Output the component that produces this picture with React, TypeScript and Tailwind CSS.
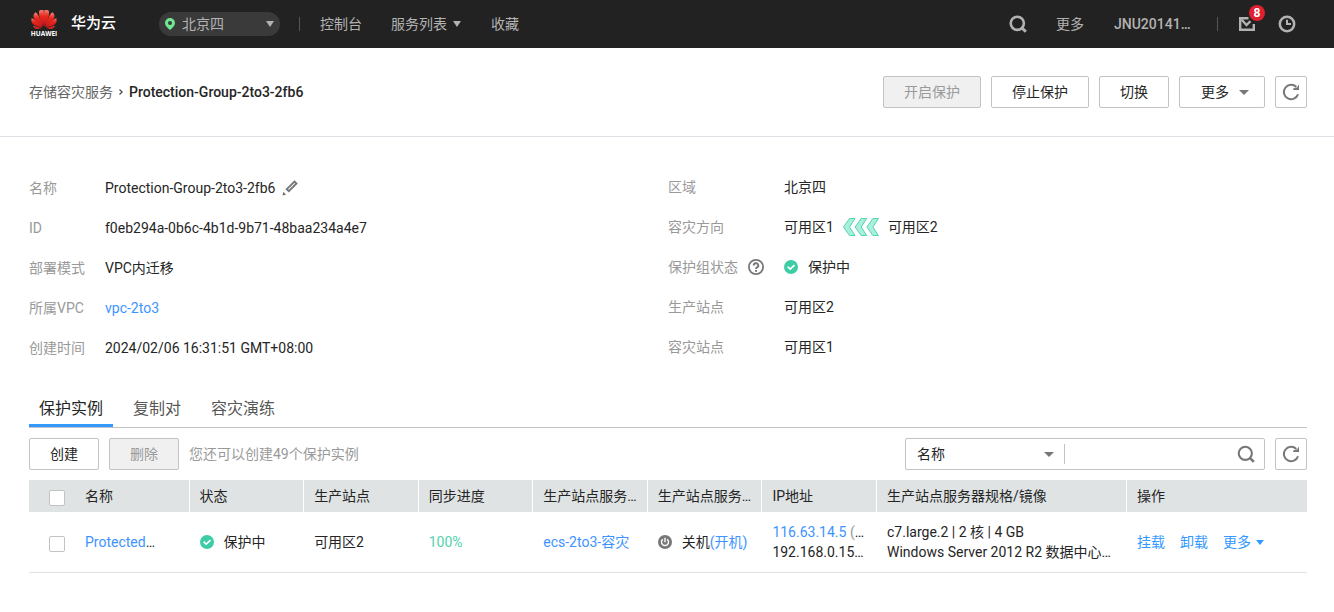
import type { ReactNode } from "react";

function HuaweiLogo() {
  return (
    <svg className="h-7 w-7" viewBox="0 0 28 28" role="img" aria-label="HUAWEI">
      <defs>
        <linearGradient id="petal" x1="0" y1="0" x2="0" y2="1">
          <stop offset="0" stopColor="#f58a78" />
          <stop offset="0.4" stopColor="#e8281f" />
          <stop offset="1" stopColor="#cc161c" />
        </linearGradient>
      </defs>
      <g fill="url(#petal)" transform="translate(.7 -1) scale(.95)">
        <path d="M13.600 18.600C10.300 12.500 8 6.500 8.800 2.400C9.500 1 11.400 .2 12.800 .1C14.200 .9 14.300 8 13.600 18.600Z" />
        <path d="M14.400 18.600C17.700 12.500 20 6.500 19.200 2.400C18.500 1 16.600 .2 15.200 .1C13.800 .9 13.700 8 14.400 18.600Z" />
        <path d="M12.900 18.800C11.800 14.500 8.900 6.700 5.400 3.500C3.500 4.500 2.700 6.500 3 8.400C3.600 12 8.500 16.400 12.900 18.800Z" />
        <path d="M15.100 18.800C16.200 14.500 19.100 6.700 22.600 3.500C24.500 4.500 25.300 6.500 25 8.400C24.400 12 19.500 16.400 15.100 18.800Z" />
        <path d="M12.300 19.200C9.100 15.600 4.500 11.600 1.100 9.500C.2 12 .6 14.600 2.800 16.200C5.200 17.800 9 18.900 12.300 19.200Z" />
        <path d="M15.700 19.200C18.900 15.600 23.500 11.600 26.900 9.500C27.800 12 27.400 14.600 25.200 16.200C22.800 17.800 19 18.900 15.700 19.200Z" />
        <path d="M11.800 19.700C8.800 19.300 5.400 18.400 2.300 17.500C3.200 19.600 5 21.100 6.900 21.100C8.500 21 10.400 20.300 11.800 19.700Z" />
        <path d="M16.200 19.700C19.200 19.300 22.600 18.400 25.700 17.500C24.800 19.600 23 21.100 21.100 21.100C19.500 21 17.600 20.300 16.200 19.700Z" />
      </g>
      <text x="14" y="25.800" textAnchor="middle" fontSize="6.500" fontWeight="700" fontFamily="Open Sans, sans-serif" fill="#fff">
        HUAWEI
      </text>
    </svg>
  );
}

function Caret({ className }: { className: string }) {
  return (
    <svg className={className} viewBox="0 0 10 6" preserveAspectRatio="none" aria-hidden="true">
      <path d="M0 0h10L5 6z" fill="currentColor" />
    </svg>
  );
}

function SearchIcon({ bold }: { bold?: boolean }) {
  return (
    <svg className="size-[18px]" viewBox="0 0 18 18" fill="none" stroke="currentColor" strokeWidth={bold ? 2.6 : 2.1} aria-hidden="true">
      <circle cx="8.300" cy="8.300" r="6.600" />
      <path d="M12.800 12.800l4 4" strokeWidth={bold ? 3 : 2.6} />
    </svg>
  );
}

function RefreshIcon() {
  return (
    <svg className="size-[18px]" viewBox="0 0 18 18" fill="none" stroke="currentColor" strokeWidth="2" aria-hidden="true">
      <path d="M16 11.200A7.200 7.200 0 1 1 14.300 4" />
      <path d="M17 1.400v5.600h-5.800v-1.600l3.800-.8z" fill="currentColor" stroke="none" />
    </svg>
  );
}

function PencilIcon() {
  return (
    <svg className="size-4" viewBox="0 0 16 16" aria-hidden="true">
      <path d="M4.800 9.200L12.500 1.500l2 2-7.700 7.700z" fill="none" stroke="#777" strokeWidth="1.900" />
      <path d="M.4 15.600l.9-3.800 2.900 2.900z" fill="#777" />
    </svg>
  );
}

function CheckBadge() {
  return (
    <svg className="size-3.5 shrink-0" viewBox="0 0 14 14" aria-hidden="true">
      <circle cx="7" cy="7" r="7" fill="#3dcca6" />
      <path d="M3.600 6.700l2.600 2.400 4.300-4" fill="none" stroke="#fff" strokeWidth="1.700" />
    </svg>
  );
}

function PowerBadge() {
  return (
    <svg className="size-3.5 shrink-0" viewBox="0 0 14 14" fill="none" aria-hidden="true">
      <circle cx="7" cy="7" r="7" fill="#777" />
      <path d="M4.800 4.300a3.500 3.500 0 1 0 4.400 0" stroke="#fff" strokeWidth="1.400" />
      <path d="M7 2.800v4.400" stroke="#fff" strokeWidth="1.400" />
    </svg>
  );
}

function HelpIcon() {
  return (
    <svg className="size-4" viewBox="0 0 16 16" fill="none" stroke="#777" aria-hidden="true">
      <circle cx="8" cy="8" r="7.100" strokeWidth="1.800" />
      <path d="M5.700 6.500a2.300 2.200 0 1 1 3.400 1.900c-.8.400-1.100.8-1.100 1.500" strokeWidth="1.900" />
      <path d="M7 10.900h2v1.800H7z" fill="#777" stroke="none" />
    </svg>
  );
}

function DirectionArrows() {
  return (
    <svg className="h-[18px] w-9" viewBox="0 0 36 18" fill="#a9efdc" stroke="#50d4b1" aria-hidden="true">
      <path d="M6.500 .5h5.500L6.500 9l5.500 8.500H6.500L.5 9z" />
      <path d="M18.200 .5h5.500L18.200 9l5.500 8.500h-5.500L12.200 9z" />
      <path d="M29.900 .5h5.500L29.900 9l5.500 8.500h-5.500L23.900 9z" />
    </svg>
  );
}

function MailIcon() {
  return (
    <svg className="h-4 w-[18px]" viewBox="0 0 18 16" fill="none" stroke="currentColor" strokeWidth="2.400" aria-hidden="true">
      <path d="M10.500 2.200H2.200v11.600h13.600V8" />
      <path d="M3.500 3.500L8.500 9l4-3.800" />
    </svg>
  );
}

function ClockIcon() {
  return (
    <svg className="size-[18px]" viewBox="0 0 18 18" fill="none" stroke="currentColor" strokeWidth="2.500" aria-hidden="true">
      <circle cx="9" cy="9" r="7.200" />
      <path d="M9 4.800V9h4" strokeWidth="2" />
    </svg>
  );
}

const buttonBase = "h-8 rounded-xs border border-[#c3c3c3] bg-white text-[#252525]";
const disabledButton = "h-8 rounded-xs border border-[#c3c3c3] bg-[#f0f0f0] text-[#999]";

function TopBar() {
  return (
    <header className="flex h-12 items-center bg-[#222] pr-[38px] pl-[30px] text-[#b2b2b2]">
      <a href="#home" className="flex items-center gap-[13px]">
        <HuaweiLogo />
        <span className="text-[15px] font-medium text-white">华为云</span>
      </a>
      <button type="button" className="ml-[43px] flex h-6 w-[121px] items-center rounded-full bg-[#3a3a3a] px-1.5">
        <svg className="h-3 w-2.5" viewBox="0 0 10 12" aria-hidden="true">
          <path d="M5 0a5 5 0 0 1 5 5c0 3-3.500 5.500-5 7-1.500-1.500-5-4-5-7a5 5 0 0 1 5-5zm0 3a2 2 0 1 0 0 4 2 2 0 0 0 0-4z" fill="#6fe890" fillRule="evenodd" />
        </svg>
        <span className="ml-[7px]">北京四</span>
        <Caret className="ml-auto h-1.5 w-2" />
      </button>
      <nav className="ml-[19px] flex items-center">
        <span className="mr-5 h-3.5 w-px bg-[#555]" />
        <a href="#console">控制台</a>
        <button type="button" className="ml-[29px] flex items-center gap-1.5">
          服务列表
          <Caret className="h-1.5 w-2" />
        </button>
        <a href="#favorites" className="ml-[30px]">收藏</a>
      </nav>
      <div className="ml-auto flex items-center">
        <button type="button" aria-label="搜索"><SearchIcon bold /></button>
        <button type="button" className="ml-[29px]">更多</button>
        <button type="button" className="ml-[30px] w-[77px] text-left font-medium whitespace-nowrap">JNU20141…</button>
        <span className="ml-[26px] h-3.5 w-px bg-[#555]" />
        <button type="button" className="relative ml-5" aria-label="消息">
          <MailIcon />
          <span className="absolute -top-[11px] left-[11px] flex size-4 items-center justify-center rounded-full bg-[#e0202e] text-xs font-bold text-white">8</span>
        </button>
        <button type="button" className="ml-[22px]" aria-label="历史"><ClockIcon /></button>
      </div>
    </header>
  );
}

function PageHeader() {
  return (
    <div className="flex items-center justify-between border-b border-[#dfe1e6] pt-7 pr-[27px] pb-7 pl-[29px]">
      <div className="flex items-center">
        <a href="#sdrs" className="text-[#666]">存储容灾服务</a>
        <svg className="mx-1.5 h-2 w-1" viewBox="0 0 4 8" fill="none" stroke="#444" strokeWidth="1.200" aria-hidden="true">
          <path d="M.5 1.500L3.200 4 .5 6.500" />
        </svg>
        <h1 className="font-medium text-[#252525]">Protection-Group-2to3-2fb6</h1>
      </div>
      <div className="flex gap-2.5">
        <button type="button" disabled className={`${disabledButton} w-[98px]`}>开启保护</button>
        <button type="button" className={`${buttonBase} w-[98px]`}>停止保护</button>
        <button type="button" className={`${buttonBase} w-[70px]`}>切换</button>
        <button type="button" className={`${buttonBase} flex w-[86px] items-center justify-center gap-2.5 pl-1.5`}>
          更多
          <Caret className="h-[5px] w-2.5 text-[#777]" />
        </button>
        <button type="button" aria-label="刷新" className={`${buttonBase} flex w-8 items-center justify-center`}>
          <span className="text-[#777]"><RefreshIcon /></span>
        </button>
      </div>
    </div>
  );
}

function Field({ label, wide, children }: { label: ReactNode; wide?: boolean; children: ReactNode }) {
  return (
    <div className="flex h-10 items-center">
      <dt className={`flex items-center gap-2.5 text-[#999] ${wide ? "w-[116px]" : "w-[76px]"}`}>{label}</dt>
      <dd className="flex items-center">{children}</dd>
    </div>
  );
}

function Details() {
  return (
    <div className="grid grid-cols-2 gap-x-0.5 px-[29px] pt-[30px]">
      <dl className="pt-px">
        <Field label="名称">
          Protection-Group-2to3-2fb6
          <button type="button" aria-label="编辑名称" className="ml-[7px]"><PencilIcon /></button>
        </Field>
        <Field label="ID">f0eb294a-0b6c-4b1d-9b71-48baa234a4e7</Field>
        <Field label="部署模式">VPC内迁移</Field>
        <Field label="所属VPC"><a href="#vpc" className="text-[#3d94ff]">vpc-2to3</a></Field>
        <Field label="创建时间">2024/02/06 16:31:51 GMT+08:00</Field>
      </dl>
      <dl>
        <Field wide label="区域">北京四</Field>
        <Field wide label="容灾方向">
          <span className="flex items-center gap-[9px]">可用区1<DirectionArrows />可用区2</span>
        </Field>
        <Field wide label={<>保护组状态<HelpIcon /></>}>
          <span className="flex items-center gap-2.5"><CheckBadge />保护中</span>
        </Field>
        <Field wide label="生产站点">可用区2</Field>
        <Field wide label="容灾站点">可用区1</Field>
      </dl>
    </div>
  );
}

function Tabs() {
  const tab = "h-9 border-b-[3px] px-2.5 pt-0.5";
  return (
    <div role="tablist" className="mt-[23px] flex h-[37px] gap-2.5 border-b border-[#c3c3c3] text-base text-[#575757]">
      <button type="button" role="tab" aria-selected="true" className={`${tab} border-[#3399ff] text-[#252525]`}>保护实例</button>
      <button type="button" role="tab" aria-selected="false" className={`${tab} border-transparent`}>复制对</button>
      <button type="button" role="tab" aria-selected="false" className={`${tab} border-transparent`}>容灾演练</button>
    </div>
  );
}

function Toolbar() {
  return (
    <div className="flex items-center py-2.5">
      <button type="button" className={`${buttonBase} w-[70px]`}>创建</button>
      <button type="button" disabled className={`${disabledButton} ml-2.5 w-[70px]`}>删除</button>
      <span className="ml-2.5 text-[#999]">您还可以创建49个保护实例</span>
      <form className="ml-auto flex h-8 w-[360px] items-center rounded-xs border border-[#c3c3c3]">
        <div className="relative flex w-[158px] items-center">
          <select aria-label="筛选条件" className="h-[30px] w-full appearance-none bg-transparent pl-[11px] outline-none">
            <option>名称</option>
          </select>
          <Caret className="pointer-events-none absolute right-2.5 h-[5px] w-2.5 text-[#777]" />
        </div>
        <input type="search" aria-label="搜索内容" className="h-5 min-w-0 flex-1 border-l border-[#c3c3c3] px-2 outline-none" />
        <button type="button" aria-label="搜索" className="mr-[9px] text-[#777]"><SearchIcon /></button>
      </form>
      <button type="button" aria-label="刷新" className={`${buttonBase} ml-2.5 flex w-8 items-center justify-center`}>
        <span className="text-[#777]"><RefreshIcon /></span>
      </button>
    </div>
  );
}

const columns = ["名称", "状态", "生产站点", "同步进度", "生产站点服务…", "生产站点服务…", "IP地址", "生产站点服务器规格/镜像"];

function InstanceTable() {
  const checkbox = "block size-4 appearance-none rounded-xs border border-[#c3c3c3] bg-white checked:bg-[#3399ff]";
  return (
    <table className="w-full table-fixed border-separate border-spacing-0 whitespace-nowrap">
      <colgroup>
        <col className="w-[46px]" />
        <col span={7} />
        <col className="w-[250px]" />
        <col className="w-[180px]" />
      </colgroup>
      <thead>
        <tr className="h-8 bg-[#dfe3e4]">
          <th className="pt-[3px] pl-5"><input type="checkbox" aria-label="全选" className={checkbox} /></th>
          {columns.map((name, i) => (
            <th key={i} className="border-r border-white px-2.5 text-left font-normal">{name}</th>
          ))}
          <th className="px-2.5 text-left font-normal">操作</th>
        </tr>
      </thead>
      <tbody>
        <tr className="h-[61px] *:border-b *:border-[#dfe1e6]">
          <td className="pt-1 pl-5"><input type="checkbox" aria-label="选择实例" className={checkbox} /></td>
          <td className="px-2.5"><a href="#instance" className="text-[#3d94ff]">Protected</a>…</td>
          <td className="px-2.5"><span className="flex items-center gap-2.5"><CheckBadge />保护中</span></td>
          <td className="px-2.5">可用区2</td>
          <td className="px-2.5 text-[#50d4ab]">100%</td>
          <td className="px-2.5"><a href="#ecs" className="text-[#3d94ff]">ecs-2to3-容灾</a></td>
          <td className="px-2.5">
            <span className="flex items-center gap-2.5">
              <PowerBadge />
              <span>关机<a href="#power-on" className="text-[#3d94ff]">(开机)</a></span>
            </span>
          </td>
          <td className="px-2.5">
            <div><a href="#eip" className="text-[#3d94ff]">116.63.14.5</a> <span className="text-[#999]">(</span>…</div>
            <div>192.168.0.15…</div>
          </td>
          <td className="px-2.5">
            <div>c7.large.2 | 2 核 | 4 GB</div>
            <div>Windows Server 2012 R2 数据中心…</div>
          </td>
          <td className="px-2.5">
            <div className="flex items-center gap-[15px] text-[#3399ff]">
              <button type="button">挂载</button>
              <button type="button">卸载</button>
              <button type="button" className="flex items-center gap-[5px]">更多<Caret className="h-[5px] w-2" /></button>
            </div>
          </td>
        </tr>
      </tbody>
    </table>
  );
}

export default function App() {
  return (
    <div className="min-h-screen bg-white font-[Roboto,'Noto_Sans_CJK_SC',sans-serif] text-sm text-[#252525]">
      <TopBar />
      <PageHeader />
      <main>
        <Details />
        <section className="pr-[27px] pl-[29px]">
          <Tabs />
          <Toolbar />
          <InstanceTable />
        </section>
      </main>
    </div>
  );
}
